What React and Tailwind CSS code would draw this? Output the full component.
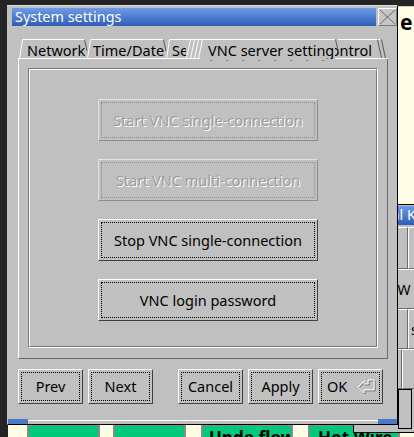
import React from "react";

function Btn({ children, disabled = false, className = "", inner = "justify-center" }) {
  if (disabled) {
    return (
      <div className={`flex p-[2px] border border-t-[#e4e4e4] border-l-[#e4e4e4] border-r-[#8c8c8c] border-b-[#8c8c8c] ${className}`}>
        <div className={`flex-1 flex items-center border border-dotted border-[#8c8c8c] text-[#9c9c9c] [text-shadow:1px_1px_0_#ffffff] ${inner}`}>
          {children}
        </div>
      </div>
    );
  }
  return (
    <div className={`flex p-[2px] border border-t-white border-l-white border-r-[#404040] border-b-[#404040] ${className}`}>
      <div className={`flex-1 flex items-center border border-dotted border-black text-black ${inner}`}>
        {children}
      </div>
    </div>
  );
}

function TabStrip() {
  return (
    <div className="relative ml-[10px] w-[370px] h-[20px] flex text-[14.5px] leading-none text-black">
      <div className="w-[69px] pl-[9px] pt-[4px] overflow-hidden whitespace-nowrap">Network</div>
      <div className="w-[79px] pl-[6px] pt-[4px] overflow-hidden whitespace-nowrap">Time/Date</div>
      <div className="w-[20px] pl-[6px] pt-[4px] overflow-hidden whitespace-nowrap">Se</div>
      <div className="w-[14px]" />
      <div className="w-[135px] pl-[8px] pt-[4px] overflow-hidden whitespace-nowrap">VNC server setting</div>
      <div className="w-[43px] pt-[4px] pr-[6px] overflow-hidden whitespace-nowrap flex justify-end">ontrol</div>
      <svg className="absolute left-0 top-0 pointer-events-none overflow-visible" width="370" height="20" viewBox="0 0 370 20">
        <g stroke="#ffffff" strokeWidth="1" fill="none">
          <path d="M1.5 19.5 L4.5 0.5 L67 0.5" />
          <path d="M69.5 19.5 L72.5 0.5 L146 0.5" />
          <path d="M148.5 19.5 L151.5 0.5 L317 0.5" />
          <path d="M168.5 19.5 L172.5 0.5" />
          <path d="M172.5 19.5 L176.5 0.5" />
          <path d="M176.5 19.5 L180.5 0.5" />
          <path d="M180.5 19.5 L184.5 0.5" />
          <path d="M320 0.5 L362 0.5" />
          <path d="M0 19.5 L182 19.5" />
          <path d="M317 19.5 L370 19.5" />
        </g>
        <g stroke="#5a5a5a" strokeWidth="1" fill="none">
          <path d="M66.5 0.5 L69 12" />
          <path d="M145.5 0.5 L148 12" />
          <path d="M317.5 0.5 L320.5 13" />
          <path d="M359.5 0.5 L363.5 19" />
          <path d="M363.5 0.5 L367.5 19.5" />
        </g>
        <path d="M192 21.5 L314 21.5" stroke="#7a7a7a" strokeWidth="1" strokeDasharray="2 14" />
      </svg>
    </div>
  );
}

function EnterIcon() {
  return (
    <svg width="19" height="15" viewBox="0 0 19 15">
      <path
        d="M1.5 8.5 L7.5 2.5 L7.5 5.5 L11.5 5.5 L11.5 1.5 L17.5 1.5 L17.5 11.5 L7.5 11.5 L7.5 14.5 Z"
        fill="none"
        stroke="#6a6a6a"
        strokeWidth="1"
        transform="translate(0.6 0.4)"
      />
      <path
        d="M1.5 8.5 L7.5 2.5 L7.5 5.5 L11.5 5.5 L11.5 1.5 L17.5 1.5 L17.5 11.5 L7.5 11.5 L7.5 14.5 Z"
        fill="none"
        stroke="#ffffff"
        strokeWidth="1"
        transform="translate(-0.4 -0.6)"
      />
    </svg>
  );
}

function Key({ w, children, className = "" }) {
  return (
    <div
      className={`h-full shrink-0 flex items-center justify-center border border-t-white border-l-white border-r-[#6a6a6a] border-b-[#6a6a6a] text-[14px] text-black ${className}`}
      style={{ width: w }}
    >
      {children}
    </div>
  );
}

export default function App() {
  return (
    <div className="relative w-[414px] h-[437px] overflow-hidden bg-[#242424] font-['Noto_Sans',sans-serif]">
      {/* background application */}
      <div className="absolute left-[8px] top-[6px] w-[406px] h-[431px] bg-[#fffee4] border-t border-t-[#cfcfc0] flex flex-col">
        <div className="h-[29px] pl-[392px] pt-[5px] text-[21px] font-bold leading-none text-black">e</div>
        <div className="ml-[390px] mt-[80px] h-[2px] bg-[#e00000]" />
        <div className="mt-[311px] pl-[19px] flex items-start">
          <div className="w-[73px] h-[20px] border-2 border-[#8a8a8a] bg-[#00c97c]" />
          <div className="ml-[13px] w-[73px] h-[20px] border-2 border-[#8a8a8a] bg-[#00c97c]" />
          <div className="ml-[15px] w-[92px] h-[20px] border-2 border-[#8a8a8a] bg-[#00c97c] pl-[6px] pt-[3px] text-[17px] font-bold leading-none text-black whitespace-nowrap overflow-hidden">Undo flow</div>
          <div className="ml-[15px] w-[92px] h-[20px] border-2 border-[#8a8a8a] bg-[#00c97c] pl-[8px] pt-[3px] text-[17px] font-bold leading-none text-black whitespace-nowrap overflow-hidden">Hot Wire</div>
        </div>
      </div>

      {/* virtual keyboard window behind */}
      <div className="absolute left-[353px] top-[204px] w-[100px] h-[229px] bg-[#c0c0c0] border border-black flex flex-col">
        <div className="mx-[1px] mt-[1px] h-[19px] bg-gradient-to-b from-[#6d9ce8] to-[#2f5db5] text-white text-[14.4px] leading-none pl-[4px] pt-[2px] whitespace-nowrap overflow-hidden">
          Virtual Keyboard
        </div>
        <div className="flex flex-col pt-[2px] gap-0">
          <div className="flex h-[42px]">
            <Key w={54} />
            <Key w={40} />
          </div>
          <div className="flex h-[40px]">
            <Key w={30} />
            <Key w={40}>W</Key>
          </div>
          <div className="flex h-[40px]">
            <Key w={54} />
            <Key w={40} className="justify-start pl-[2px]">s</Key>
          </div>
          <div className="flex h-[40px]">
            <Key w={48} />
            <Key w={40} />
          </div>
          <div className="flex h-[40px] pl-[44px]">
            <div className="w-[14px] h-full border border-black bg-[#c0c0c0]" />
          </div>
        </div>
      </div>

      {/* System settings dialog */}
      <div className="absolute left-[7px] top-[5px] w-[391px] h-[420px] bg-[#c0c0c0] border border-t-[#dedede] border-l-[#c0c0c0] border-r-black border-b-black flex flex-col">
        {/* title row */}
        <div className="flex pt-[2px] pl-[4px] gap-[2px] h-[20px]">
          <div className="w-[364px] h-[18px] bg-gradient-to-b from-[#6d9ce8] to-[#2f5db5] text-white text-[14.4px] leading-none pl-[3px] pt-[2px] whitespace-nowrap">
            System settings
          </div>
          <div className="w-[19px] h-[18px] border border-t-white border-l-white border-r-[#7a7a7a] border-b-[#7a7a7a] bg-[#c6c6c6]">
            <svg width="17" height="16" viewBox="0 0 17 16">
              <path d="M1 1 L16 15 M16 1 L1 15" stroke="#6a6a6a" strokeWidth="1" fill="none" />
            </svg>
          </div>
        </div>

        <div className="mt-[13px]">
          <TabStrip />
        </div>

        {/* tab panel */}
        <div className="ml-[10px] w-[370px] h-[300px] border-l border-r border-b border-l-white border-r-[#6a6a6a] border-b-[#6a6a6a] pl-[9px] pr-[9px] pt-[9px] pb-[10px]">
          <div className="w-[350px] h-[280px] border border-t-[#7a7a7a] border-l-[#7a7a7a] border-r-white border-b-white">
            <div className="w-full h-full border border-t-white border-l-white border-r-[#7a7a7a] border-b-[#7a7a7a] pt-[29px] pl-[68px] flex flex-col gap-[18px] text-[14.5px] leading-none">
              <Btn disabled className="w-[220px] h-[42px]">Start VNC single-connection</Btn>
              <Btn disabled className="w-[220px] h-[42px]">Start VNC multi-connection</Btn>
              <Btn className="w-[220px] h-[42px]">Stop VNC single-connection</Btn>
              <Btn className="w-[220px] h-[42px]">VNC login password</Btn>
            </div>
          </div>
        </div>

        {/* bottom buttons */}
        <div className="mt-[10px] ml-[10px] flex h-[35px] text-[14.5px] leading-none">
          <Btn className="w-[65px] h-[35px]">Prev</Btn>
          <Btn className="ml-[5px] w-[65px] h-[35px]">Next</Btn>
          <Btn className="ml-[25px] w-[65px] h-[35px]">Cancel</Btn>
          <Btn className="ml-[5px] w-[65px] h-[35px]">Apply</Btn>
          <Btn className="ml-[5px] w-[65px] h-[35px]" inner="justify-start pl-[5px] gap-[10px]">
            <span>OK</span>
            <EnterIcon />
          </Btn>
        </div>

        {/* resize strip */}
        <div className="mt-[15px] h-[5px] flex">
          <div className="w-[20px] h-full bg-[#4a78cc]" />
          <div className="flex-1 h-full border-t border-t-white mt-[1px]" />
          <div className="w-[19px] h-full bg-[#4a78cc]" />
        </div>
      </div>
    </div>
  );
}
